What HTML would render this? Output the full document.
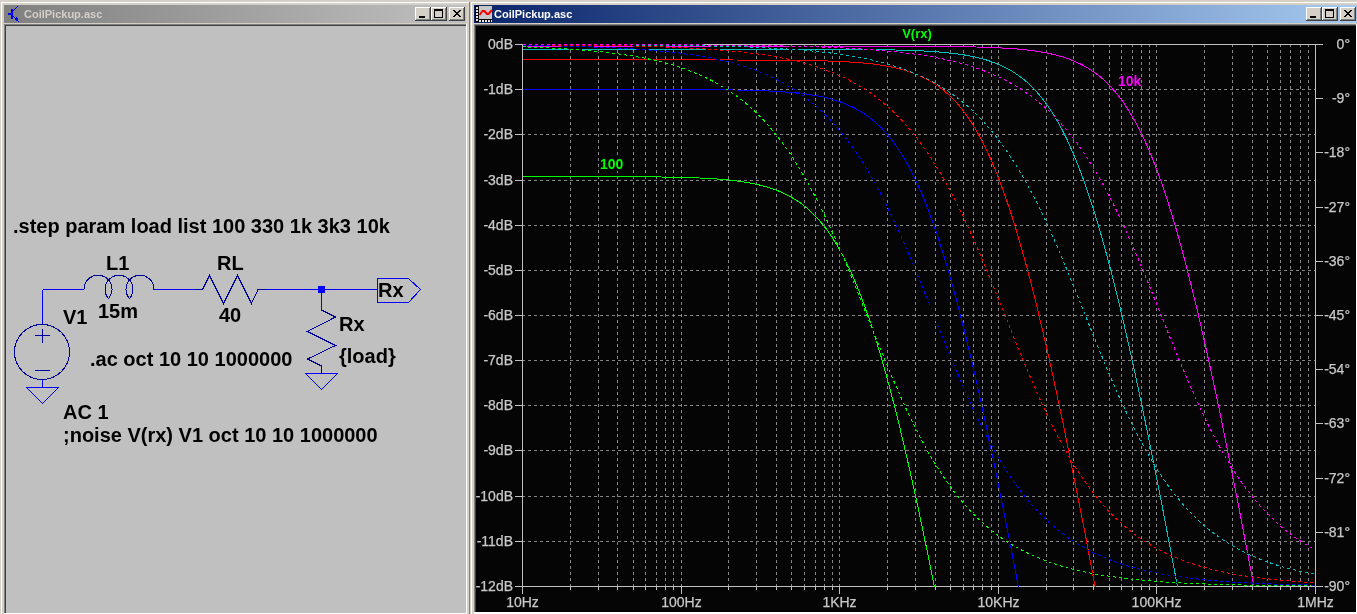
<!DOCTYPE html>
<html><head><meta charset="utf-8"><style>
html,body{margin:0;padding:0;background:#D4D0C8;width:1357px;height:614px;overflow:hidden}
svg{display:block;will-change:transform}
text{font-family:"Liberation Sans",sans-serif}
</style></head><body>
<svg width="1357" height="614" viewBox="0 0 1357 614">
<defs>
<linearGradient id="act" x1="0" y1="0" x2="1" y2="0">
<stop offset="0" stop-color="#0A246A"/><stop offset="1" stop-color="#A6CAF0"/>
</linearGradient>
<linearGradient id="inact" x1="0" y1="0" x2="1" y2="0">
<stop offset="0" stop-color="#808080"/><stop offset="1" stop-color="#C0C0C0"/>
</linearGradient>
<clipPath id="pclip"><rect x="522" y="44" width="794" height="543"/></clipPath>
</defs>
<rect x="0" y="0" width="1357" height="614" fill="#D4D0C8"/>
<g shape-rendering="crispEdges">
<!-- left window frame -->
<rect x="1" y="2" width="1" height="612" fill="#FFFFFF"/>
<rect x="1" y="2" width="468" height="1" fill="#FFFFFF"/>
<rect x="469" y="2" width="1" height="612" fill="#808080"/>
<rect x="4" y="5" width="462" height="18" fill="url(#inact)"/>
<rect x="4" y="24" width="462" height="1" fill="#808080"/>
<rect x="4" y="24" width="1" height="590" fill="#808080"/>
<rect x="5" y="25" width="461" height="1" fill="#404040"/>
<rect x="5" y="25" width="1" height="588" fill="#404040"/>
<rect x="466" y="24" width="1" height="590" fill="#FFFFFF"/>
<rect x="4" y="613" width="463" height="1" fill="#FFFFFF"/>
<rect x="6" y="26" width="460" height="587" fill="#C0C0C0"/>
<!-- right window frame -->
<rect x="471" y="2" width="1" height="612" fill="#FFFFFF"/>
<rect x="471" y="2" width="886" height="1" fill="#FFFFFF"/>
<rect x="474" y="5" width="883" height="18" fill="url(#act)"/>
<rect x="474" y="24" width="883" height="1" fill="#808080"/>
<rect x="474" y="24" width="1" height="590" fill="#808080"/>
<rect x="475" y="25" width="882" height="1" fill="#404040"/>
<rect x="475" y="25" width="1" height="588" fill="#404040"/>
<rect x="476" y="26" width="880" height="586" fill="#050505"/>
<rect x="1356" y="24" width="1" height="590" fill="#FFFFFF"/>
<rect x="474" y="612" width="883" height="2" fill="#FFFFFF"/>
</g>
<!-- titles -->
<text x="24" y="18" font-size="11" font-weight="bold" fill="#D4D0C8">CoilPickup.asc</text>
<text x="494" y="18" font-size="11" font-weight="bold" fill="#FFFFFF">CoilPickup.asc</text>
<g shape-rendering="crispEdges"><g transform="translate(415,7)"><rect x="0" y="0" width="16" height="14" fill="#D4D0C8"/><path d="M0.5,13.5 V0.5 H15.5" stroke="#FFFFFF" fill="none"/><path d="M15.5,0 V14 M0,13.5 H16" stroke="#404040" fill="none"/><path d="M14.5,1 V13 M1,12.5 H15" stroke="#808080" fill="none"/><rect x="4" y="9" width="6" height="2" fill="#000"/></g><g transform="translate(431,7)"><rect x="0" y="0" width="16" height="14" fill="#D4D0C8"/><path d="M0.5,13.5 V0.5 H15.5" stroke="#FFFFFF" fill="none"/><path d="M15.5,0 V14 M0,13.5 H16" stroke="#404040" fill="none"/><path d="M14.5,1 V13 M1,12.5 H15" stroke="#808080" fill="none"/><path d="M3.5,2.5 H11.5 V10.5 H3.5 Z" fill="none" stroke="#000"/><rect x="3" y="2" width="9" height="2" fill="#000"/></g><g transform="translate(449,7)"><rect x="0" y="0" width="16" height="14" fill="#D4D0C8"/><path d="M0.5,13.5 V0.5 H15.5" stroke="#FFFFFF" fill="none"/><path d="M15.5,0 V14 M0,13.5 H16" stroke="#404040" fill="none"/><path d="M14.5,1 V13 M1,12.5 H15" stroke="#808080" fill="none"/><path d="M4,3 L11,10 M5,3 L12,10 M11,3 L4,10 M12,3 L5,10" stroke="#000" stroke-width="1" fill="none"/></g><g transform="translate(1306,7)"><rect x="0" y="0" width="16" height="14" fill="#D4D0C8"/><path d="M0.5,13.5 V0.5 H15.5" stroke="#FFFFFF" fill="none"/><path d="M15.5,0 V14 M0,13.5 H16" stroke="#404040" fill="none"/><path d="M14.5,1 V13 M1,12.5 H15" stroke="#808080" fill="none"/><rect x="4" y="9" width="6" height="2" fill="#000"/></g><g transform="translate(1322,7)"><rect x="0" y="0" width="16" height="14" fill="#D4D0C8"/><path d="M0.5,13.5 V0.5 H15.5" stroke="#FFFFFF" fill="none"/><path d="M15.5,0 V14 M0,13.5 H16" stroke="#404040" fill="none"/><path d="M14.5,1 V13 M1,12.5 H15" stroke="#808080" fill="none"/><path d="M3.5,2.5 H11.5 V10.5 H3.5 Z" fill="none" stroke="#000"/><rect x="3" y="2" width="9" height="2" fill="#000"/></g><g transform="translate(1340,7)"><rect x="0" y="0" width="16" height="14" fill="#D4D0C8"/><path d="M0.5,13.5 V0.5 H15.5" stroke="#FFFFFF" fill="none"/><path d="M15.5,0 V14 M0,13.5 H16" stroke="#404040" fill="none"/><path d="M14.5,1 V13 M1,12.5 H15" stroke="#808080" fill="none"/><path d="M4,3 L11,10 M5,3 L12,10 M11,3 L4,10 M12,3 L5,10" stroke="#000" stroke-width="1" fill="none"/></g></g>
<!-- left icon: transistor -->
<g shape-rendering="crispEdges" fill="#0000FF">
<rect x="11" y="9" width="2" height="10"/>
<rect x="8" y="13" width="3" height="2"/>
<rect x="13" y="10" width="1" height="1"/><rect x="14" y="9" width="1" height="1"/><rect x="15" y="8" width="1" height="1"/><rect x="16" y="7" width="1" height="1"/><rect x="17" y="6" width="1" height="1"/>
<rect x="13" y="16" width="1" height="1"/><rect x="14" y="17" width="1" height="1"/><rect x="15" y="18" width="3" height="2"/><rect x="16" y="17" width="1" height="4"/><rect x="17" y="20" width="1" height="1"/><rect x="18" y="21" width="1" height="1"/>
</g>
<!-- right icon: waveform -->
<g shape-rendering="crispEdges">
<rect x="475" y="6" width="17" height="16" fill="#000"/>
<rect x="479" y="6" width="13" height="13" fill="#C8C8C8"/>
<g fill="#E8E8E8">
<rect x="476" y="7" width="2" height="2"/><rect x="476" y="10" width="2" height="2"/><rect x="476" y="13" width="2" height="2"/><rect x="476" y="16" width="2" height="2"/><rect x="476" y="19" width="2" height="2"/>
<rect x="479" y="20" width="2" height="2"/><rect x="482" y="20" width="2" height="2"/><rect x="485" y="20" width="2" height="2"/><rect x="488" y="20" width="2" height="2"/><rect x="491" y="20" width="1" height="2"/>
</g>
</g>
<path d="M479.5,15 L482.5,11 L484.5,11 L487,14 L488.5,14 L492,10" stroke="#FF0000" stroke-width="2" fill="none"/>
<!-- schematic -->
<g fill="none" stroke-width="1" shape-rendering="crispEdges">
<path d="M42.5,289.5 H84 M153,289.5 H202 M264,289.5 H377 M42.5,289.5 V324 M321.5,289.5 V310 M42.5,380 V387" stroke="#0000FF"/>
<path d="M305.5,373.5 H337.5 L321.5,389.5 Z M26.5,387.5 H58.5 L42.5,403.5 Z" stroke="#0000FF"/>
<path d="M377.5,278.5 H408.5 L420.5,289.5 L408.5,302.5 H377.5 Z" stroke="#0000FF"/>
</g>
<g fill="none" stroke="#00009C" stroke-width="1" shape-rendering="crispEdges">
<path d="M84,289.5 A14,14 0 1 1 108.5,298.5 A14,14 0 1 1 129.5,298.5 A14,14 0 1 1 154,289.5"/>
<path d="M196,289.5 H202.5 L209.5,275.5 L223.5,303.5 L237.5,275.5 L251.5,303.5 L258,289.5 H265"/>
<path d="M321.5,310 L335.5,317 L307.5,331.5 L335.5,345.5 L307.5,359 L321.5,366 V373"/>
<circle cx="42" cy="352" r="27.5"/>
<path d="M35,335.5 H50 M42.5,329 V343 M35,370.5 H50" shape-rendering="crispEdges"/>
</g>
<rect x="318" y="286" width="7" height="7" fill="#0000FF"/>
<g font-size="20" font-weight="bold" fill="#000">
<text x="13" y="233">.step param load list 100 330 1k 3k3 10k</text>
<text x="106" y="270">L1</text>
<text x="98" y="318">15m</text>
<text x="63" y="324">V1</text>
<text x="217" y="270">RL</text>
<text x="219" y="322">40</text>
<text x="339" y="331">Rx</text>
<text x="339" y="363">{load}</text>
<text x="378" y="297">Rx</text>
<text x="90" y="366">.ac oct 10 10 1000000</text>
<text x="63" y="419">AC 1</text>
<text x="63" y="442">;noise V(rx) V1 oct 10 10 1000000</text>
</g>
<!-- plot -->
<g stroke="#868686" stroke-width="1" stroke-dasharray="3 3" shape-rendering="crispEdges">
<line x1="570.5" y1="44" x2="570.5" y2="586" />
<line x1="598.5" y1="44" x2="598.5" y2="586" />
<line x1="617.5" y1="44" x2="617.5" y2="586" />
<line x1="633.5" y1="44" x2="633.5" y2="586" />
<line x1="645.5" y1="44" x2="645.5" y2="586" />
<line x1="656.5" y1="44" x2="656.5" y2="586" />
<line x1="665.5" y1="44" x2="665.5" y2="586" />
<line x1="673.5" y1="44" x2="673.5" y2="586" />
<line x1="681.5" y1="44" x2="681.5" y2="586" />
<line x1="728.5" y1="44" x2="728.5" y2="586" />
<line x1="756.5" y1="44" x2="756.5" y2="586" />
<line x1="776.5" y1="44" x2="776.5" y2="586" />
<line x1="791.5" y1="44" x2="791.5" y2="586" />
<line x1="804.5" y1="44" x2="804.5" y2="586" />
<line x1="815.5" y1="44" x2="815.5" y2="586" />
<line x1="824.5" y1="44" x2="824.5" y2="586" />
<line x1="832.5" y1="44" x2="832.5" y2="586" />
<line x1="839.5" y1="44" x2="839.5" y2="586" />
<line x1="887.5" y1="44" x2="887.5" y2="586" />
<line x1="915.5" y1="44" x2="915.5" y2="586" />
<line x1="935.5" y1="44" x2="935.5" y2="586" />
<line x1="950.5" y1="44" x2="950.5" y2="586" />
<line x1="963.5" y1="44" x2="963.5" y2="586" />
<line x1="973.5" y1="44" x2="973.5" y2="586" />
<line x1="982.5" y1="44" x2="982.5" y2="586" />
<line x1="991.5" y1="44" x2="991.5" y2="586" />
<line x1="998.5" y1="44" x2="998.5" y2="586" />
<line x1="1046.5" y1="44" x2="1046.5" y2="586" />
<line x1="1073.5" y1="44" x2="1073.5" y2="586" />
<line x1="1093.5" y1="44" x2="1093.5" y2="586" />
<line x1="1109.5" y1="44" x2="1109.5" y2="586" />
<line x1="1121.5" y1="44" x2="1121.5" y2="586" />
<line x1="1132.5" y1="44" x2="1132.5" y2="586" />
<line x1="1141.5" y1="44" x2="1141.5" y2="586" />
<line x1="1149.5" y1="44" x2="1149.5" y2="586" />
<line x1="1156.5" y1="44" x2="1156.5" y2="586" />
<line x1="1204.5" y1="44" x2="1204.5" y2="586" />
<line x1="1232.5" y1="44" x2="1232.5" y2="586" />
<line x1="1252.5" y1="44" x2="1252.5" y2="586" />
<line x1="1267.5" y1="44" x2="1267.5" y2="586" />
<line x1="1280.5" y1="44" x2="1280.5" y2="586" />
<line x1="1290.5" y1="44" x2="1290.5" y2="586" />
<line x1="1300.5" y1="44" x2="1300.5" y2="586" />
<line x1="1308.5" y1="44" x2="1308.5" y2="586" />
<line x1="522" y1="89.5" x2="1315" y2="89.5" />
<line x1="522" y1="134.5" x2="1315" y2="134.5" />
<line x1="522" y1="180.5" x2="1315" y2="180.5" />
<line x1="522" y1="225.5" x2="1315" y2="225.5" />
<line x1="522" y1="270.5" x2="1315" y2="270.5" />
<line x1="522" y1="315.5" x2="1315" y2="315.5" />
<line x1="522" y1="360.5" x2="1315" y2="360.5" />
<line x1="522" y1="405.5" x2="1315" y2="405.5" />
<line x1="522" y1="450.5" x2="1315" y2="450.5" />
<line x1="522" y1="496.5" x2="1315" y2="496.5" />
<line x1="522" y1="541.5" x2="1315" y2="541.5" />
</g>
<g stroke="#C0C0C0" stroke-width="1" shape-rendering="crispEdges">
<rect x="522.5" y="44.5" width="793" height="542" fill="none"/>
<line x1="515" y1="44.5" x2="522" y2="44.5"/>
<line x1="515" y1="89.5" x2="522" y2="89.5"/>
<line x1="515" y1="134.5" x2="522" y2="134.5"/>
<line x1="515" y1="180.5" x2="522" y2="180.5"/>
<line x1="515" y1="225.5" x2="522" y2="225.5"/>
<line x1="515" y1="270.5" x2="522" y2="270.5"/>
<line x1="515" y1="315.5" x2="522" y2="315.5"/>
<line x1="515" y1="360.5" x2="522" y2="360.5"/>
<line x1="515" y1="405.5" x2="522" y2="405.5"/>
<line x1="515" y1="450.5" x2="522" y2="450.5"/>
<line x1="515" y1="496.5" x2="522" y2="496.5"/>
<line x1="515" y1="541.5" x2="522" y2="541.5"/>
<line x1="515" y1="586.5" x2="522" y2="586.5"/>
<line x1="1315" y1="44.5" x2="1323" y2="44.5"/>
<line x1="1315" y1="98.5" x2="1323" y2="98.5"/>
<line x1="1315" y1="152.5" x2="1323" y2="152.5"/>
<line x1="1315" y1="207.5" x2="1323" y2="207.5"/>
<line x1="1315" y1="261.5" x2="1323" y2="261.5"/>
<line x1="1315" y1="315.5" x2="1323" y2="315.5"/>
<line x1="1315" y1="369.5" x2="1323" y2="369.5"/>
<line x1="1315" y1="423.5" x2="1323" y2="423.5"/>
<line x1="1315" y1="478.5" x2="1323" y2="478.5"/>
<line x1="1315" y1="532.5" x2="1323" y2="532.5"/>
<line x1="1315" y1="586.5" x2="1323" y2="586.5"/>
<line x1="522.5" y1="586" x2="522.5" y2="594"/>
<line x1="681.5" y1="586" x2="681.5" y2="594"/>
<line x1="839.5" y1="586" x2="839.5" y2="594"/>
<line x1="998.5" y1="586" x2="998.5" y2="594"/>
<line x1="1156.5" y1="586" x2="1156.5" y2="594"/>
<line x1="1315.5" y1="586" x2="1315.5" y2="594"/>
<line x1="570.5" y1="586" x2="570.5" y2="590"/>
<line x1="598.5" y1="586" x2="598.5" y2="590"/>
<line x1="617.5" y1="586" x2="617.5" y2="590"/>
<line x1="633.5" y1="586" x2="633.5" y2="590"/>
<line x1="645.5" y1="586" x2="645.5" y2="590"/>
<line x1="656.5" y1="586" x2="656.5" y2="590"/>
<line x1="665.5" y1="586" x2="665.5" y2="590"/>
<line x1="673.5" y1="586" x2="673.5" y2="590"/>
<line x1="728.5" y1="586" x2="728.5" y2="590"/>
<line x1="756.5" y1="586" x2="756.5" y2="590"/>
<line x1="776.5" y1="586" x2="776.5" y2="590"/>
<line x1="791.5" y1="586" x2="791.5" y2="590"/>
<line x1="804.5" y1="586" x2="804.5" y2="590"/>
<line x1="815.5" y1="586" x2="815.5" y2="590"/>
<line x1="824.5" y1="586" x2="824.5" y2="590"/>
<line x1="832.5" y1="586" x2="832.5" y2="590"/>
<line x1="887.5" y1="586" x2="887.5" y2="590"/>
<line x1="915.5" y1="586" x2="915.5" y2="590"/>
<line x1="935.5" y1="586" x2="935.5" y2="590"/>
<line x1="950.5" y1="586" x2="950.5" y2="590"/>
<line x1="963.5" y1="586" x2="963.5" y2="590"/>
<line x1="973.5" y1="586" x2="973.5" y2="590"/>
<line x1="982.5" y1="586" x2="982.5" y2="590"/>
<line x1="991.5" y1="586" x2="991.5" y2="590"/>
<line x1="1046.5" y1="586" x2="1046.5" y2="590"/>
<line x1="1073.5" y1="586" x2="1073.5" y2="590"/>
<line x1="1093.5" y1="586" x2="1093.5" y2="590"/>
<line x1="1109.5" y1="586" x2="1109.5" y2="590"/>
<line x1="1121.5" y1="586" x2="1121.5" y2="590"/>
<line x1="1132.5" y1="586" x2="1132.5" y2="590"/>
<line x1="1141.5" y1="586" x2="1141.5" y2="590"/>
<line x1="1149.5" y1="586" x2="1149.5" y2="590"/>
<line x1="1204.5" y1="586" x2="1204.5" y2="590"/>
<line x1="1232.5" y1="586" x2="1232.5" y2="590"/>
<line x1="1252.5" y1="586" x2="1252.5" y2="590"/>
<line x1="1267.5" y1="586" x2="1267.5" y2="590"/>
<line x1="1280.5" y1="586" x2="1280.5" y2="590"/>
<line x1="1290.5" y1="586" x2="1290.5" y2="590"/>
<line x1="1300.5" y1="586" x2="1300.5" y2="590"/>
<line x1="1308.5" y1="586" x2="1308.5" y2="590"/>
</g>
<g font-size="14" fill="#C8C8C8" stroke="#C8C8C8" stroke-width="0.25">
<text x="513" y="49" text-anchor="end">0dB</text>
<text x="513" y="94" text-anchor="end">-1dB</text>
<text x="513" y="139" text-anchor="end">-2dB</text>
<text x="513" y="185" text-anchor="end">-3dB</text>
<text x="513" y="230" text-anchor="end">-4dB</text>
<text x="513" y="275" text-anchor="end">-5dB</text>
<text x="513" y="320" text-anchor="end">-6dB</text>
<text x="513" y="365" text-anchor="end">-7dB</text>
<text x="513" y="410" text-anchor="end">-8dB</text>
<text x="513" y="455" text-anchor="end">-9dB</text>
<text x="513" y="501" text-anchor="end">-10dB</text>
<text x="513" y="546" text-anchor="end">-11dB</text>
<text x="513" y="591" text-anchor="end">-12dB</text>
<text x="1350" y="49" text-anchor="end">0°</text>
<text x="1350" y="103" text-anchor="end">-9°</text>
<text x="1350" y="157" text-anchor="end">-18°</text>
<text x="1350" y="212" text-anchor="end">-27°</text>
<text x="1350" y="266" text-anchor="end">-36°</text>
<text x="1350" y="320" text-anchor="end">-45°</text>
<text x="1350" y="374" text-anchor="end">-54°</text>
<text x="1350" y="428" text-anchor="end">-63°</text>
<text x="1350" y="483" text-anchor="end">-72°</text>
<text x="1350" y="537" text-anchor="end">-81°</text>
<text x="1350" y="591" text-anchor="end">-90°</text>
<text x="522.5" y="607" text-anchor="middle">10Hz</text>
<text x="681.5" y="607" text-anchor="middle">100Hz</text>
<text x="839.5" y="607" text-anchor="middle">1KHz</text>
<text x="998.5" y="607" text-anchor="middle">10KHz</text>
<text x="1156.5" y="607" text-anchor="middle">100KHz</text>
<text x="1315.5" y="607" text-anchor="middle">1MHz</text>
</g>
<g clip-path="url(#pclip)" shape-rendering="crispEdges">
<polyline points="522.5,176.5 527.3,176.5 532.0,176.5 536.8,176.5 541.6,176.5 546.4,176.5 551.1,176.5 555.9,176.5 560.7,176.5 565.5,176.5 570.2,176.5 575.0,176.5 579.8,176.5 584.6,176.6 589.3,176.6 594.1,176.6 598.9,176.6 603.7,176.6 608.4,176.6 613.2,176.6 618.0,176.6 622.8,176.7 627.5,176.7 632.3,176.7 637.1,176.7 641.9,176.8 646.6,176.8 651.4,176.9 656.2,176.9 661.0,177.0 665.7,177.1 670.5,177.2 675.3,177.3 680.1,177.4 684.8,177.5 689.6,177.6 694.4,177.8 699.2,178.0 703.9,178.2 708.7,178.5 713.5,178.8 718.2,179.1 723.0,179.5 727.8,179.9 732.6,180.4 737.3,181.0 742.1,181.7 746.9,182.4 751.7,183.3 756.4,184.3 761.2,185.4 766.0,186.7 770.8,188.2 775.5,189.8 780.3,191.7 785.1,193.9 789.9,196.4 794.6,199.2 799.4,202.3 804.2,205.9 809.0,209.9 813.7,214.4 818.5,219.5 823.3,225.1 828.1,231.4 832.8,238.4 837.6,246.2 842.4,254.7 847.2,264.1 851.9,274.3 856.7,285.4 861.5,297.5 866.3,310.5 871.0,324.4 875.8,339.3 880.6,355.1 885.3,371.8 890.1,389.3 894.9,407.8 899.7,427.0 904.4,447.0 909.2,467.6 914.0,489.0 918.8,511.0 923.5,533.5 928.3,556.5 933.1,580.0 937.9,603.9 942.6,628.2 947.4,652.9 952.2,677.8 957.0,703.0 961.7,728.5 966.5,754.1 971.3,780.0 976.1,806.0 980.8,832.2 985.6,858.5 990.4,884.9 995.2,911.4 999.9,938.0 1004.7,964.6 1009.5,991.4 1014.3,1018.2 1019.0,1045.0 1023.8,1071.9 1028.6,1098.8 1033.4,1125.8 1038.1,1152.8 1042.9,1179.8 1047.7,1206.9 1052.5,1233.9 1057.2,1261.0 1062.0,1288.1 1066.8,1315.2 1071.5,1342.3 1076.3,1369.4 1081.1,1396.6 1085.9,1423.7 1090.6,1450.9 1095.4,1478.0 1100.2,1505.2 1105.0,1532.3 1109.7,1559.5 1114.5,1586.7 1119.3,1613.9 1124.1,1641.0 1128.8,1668.2 1133.6,1695.4 1138.4,1722.6 1143.2,1749.8 1147.9,1776.9 1152.7,1804.1 1157.5,1831.3 1162.3,1858.5 1167.0,1885.7 1171.8,1912.9 1176.6,1940.1 1181.4,1967.3 1186.1,1994.4 1190.9,2021.6 1195.7,2048.8 1200.5,2076.0 1205.2,2103.2 1210.0,2130.4 1214.8,2157.6 1219.6,2184.8 1224.3,2212.0 1229.1,2239.2 1233.9,2266.4 1238.7,2293.6 1243.4,2320.7 1248.2,2347.9 1253.0,2375.1 1257.7,2402.3 1262.5,2429.5 1267.3,2456.7 1272.1,2483.9 1276.8,2511.1 1281.6,2538.3 1286.4,2565.5 1291.2,2592.7 1295.9,2619.9 1300.7,2647.1 1305.5,2674.3 1310.3,2701.4 1315.0,2728.6" fill="none" stroke="#00FF00" stroke-width="1"/>
<polyline points="522.5,89.4 527.3,89.4 532.0,89.4 536.8,89.4 541.6,89.4 546.4,89.4 551.1,89.4 555.9,89.4 560.7,89.4 565.5,89.4 570.2,89.4 575.0,89.4 579.8,89.4 584.6,89.4 589.3,89.4 594.1,89.4 598.9,89.4 603.7,89.4 608.4,89.4 613.2,89.4 618.0,89.4 622.8,89.4 627.5,89.4 632.3,89.4 637.1,89.4 641.9,89.4 646.6,89.4 651.4,89.4 656.2,89.4 661.0,89.5 665.7,89.5 670.5,89.5 675.3,89.5 680.1,89.5 684.8,89.5 689.6,89.5 694.4,89.6 699.2,89.6 703.9,89.6 708.7,89.7 713.5,89.7 718.2,89.8 723.0,89.8 727.8,89.9 732.6,90.0 737.3,90.0 742.1,90.1 746.9,90.2 751.7,90.4 756.4,90.5 761.2,90.7 766.0,90.9 770.8,91.1 775.5,91.4 780.3,91.6 785.1,92.0 789.9,92.4 794.6,92.8 799.4,93.3 804.2,93.9 809.0,94.5 813.7,95.3 818.5,96.1 823.3,97.1 828.1,98.3 832.8,99.5 837.6,101.0 842.4,102.7 847.2,104.6 851.9,106.7 856.7,109.2 861.5,112.0 866.3,115.1 871.0,118.7 875.8,122.7 880.6,127.2 885.3,132.2 890.1,137.9 894.9,144.2 899.7,151.2 904.4,158.9 909.2,167.4 914.0,176.7 918.8,187.0 923.5,198.1 928.3,210.1 933.1,223.1 937.9,237.0 942.6,251.8 947.4,267.6 952.2,284.3 957.0,301.8 961.7,320.2 966.5,339.5 971.3,359.4 976.1,380.1 980.8,401.4 985.6,423.4 990.4,445.9 995.2,468.9 999.9,492.4 1004.7,516.3 1009.5,540.6 1014.3,565.2 1019.0,590.2 1023.8,615.4 1028.6,640.8 1033.4,666.5 1038.1,692.3 1042.9,718.4 1047.7,744.5 1052.5,770.8 1057.2,797.2 1062.0,823.7 1066.8,850.3 1071.5,877.0 1076.3,903.7 1081.1,930.5 1085.9,957.3 1090.6,984.2 1095.4,1011.2 1100.2,1038.1 1105.0,1065.1 1109.7,1092.1 1114.5,1119.2 1119.3,1146.2 1124.1,1173.3 1128.8,1200.4 1133.6,1227.5 1138.4,1254.6 1143.2,1281.7 1147.9,1308.9 1152.7,1336.0 1157.5,1363.2 1162.3,1390.3 1167.0,1417.5 1171.8,1444.7 1176.6,1471.8 1181.4,1499.0 1186.1,1526.2 1190.9,1553.3 1195.7,1580.5 1200.5,1607.7 1205.2,1634.9 1210.0,1662.1 1214.8,1689.2 1219.6,1716.4 1224.3,1743.6 1229.1,1770.8 1233.9,1798.0 1238.7,1825.2 1243.4,1852.4 1248.2,1879.6 1253.0,1906.8 1257.7,1933.9 1262.5,1961.1 1267.3,1988.3 1272.1,2015.5 1276.8,2042.7 1281.6,2069.9 1286.4,2097.1 1291.2,2124.3 1295.9,2151.5 1300.7,2178.7 1305.5,2205.9 1310.3,2233.1 1315.0,2260.2" fill="none" stroke="#0000FF" stroke-width="1"/>
<polyline points="522.5,59.9 527.3,59.9 532.0,59.9 536.8,59.9 541.6,59.9 546.4,59.9 551.1,59.9 555.9,59.9 560.7,59.9 565.5,59.9 570.2,59.9 575.0,59.9 579.8,59.9 584.6,59.9 589.3,59.9 594.1,59.9 598.9,59.9 603.7,59.9 608.4,59.9 613.2,59.9 618.0,59.9 622.8,59.9 627.5,59.9 632.3,59.9 637.1,59.9 641.9,59.9 646.6,59.9 651.4,59.9 656.2,59.9 661.0,59.9 665.7,59.9 670.5,59.9 675.3,59.9 680.1,59.9 684.8,59.9 689.6,59.9 694.4,59.9 699.2,59.9 703.9,59.9 708.7,59.9 713.5,59.9 718.2,59.9 723.0,59.9 727.8,59.9 732.6,60.0 737.3,60.0 742.1,60.0 746.9,60.0 751.7,60.0 756.4,60.0 761.2,60.1 766.0,60.1 770.8,60.1 775.5,60.1 780.3,60.2 785.1,60.2 789.9,60.3 794.6,60.3 799.4,60.4 804.2,60.5 809.0,60.5 813.7,60.6 818.5,60.8 823.3,60.9 828.1,61.0 832.8,61.2 837.6,61.4 842.4,61.6 847.2,61.9 851.9,62.2 856.7,62.5 861.5,62.9 866.3,63.3 871.0,63.8 875.8,64.4 880.6,65.1 885.3,65.9 890.1,66.7 894.9,67.7 899.7,68.9 904.4,70.2 909.2,71.7 914.0,73.3 918.8,75.3 923.5,77.5 928.3,79.9 933.1,82.8 937.9,85.9 942.6,89.5 947.4,93.6 952.2,98.1 957.0,103.2 961.7,108.9 966.5,115.3 971.3,122.3 976.1,130.1 980.8,138.7 985.6,148.1 990.4,158.4 995.2,169.6 999.9,181.7 1004.7,194.8 1009.5,208.8 1014.3,223.7 1019.0,239.6 1023.8,256.3 1028.6,274.0 1033.4,292.4 1038.1,311.7 1042.9,331.8 1047.7,352.5 1052.5,373.9 1057.2,395.9 1062.0,418.4 1066.8,441.5 1071.5,465.0 1076.3,489.0 1081.1,513.3 1085.9,538.0 1090.6,562.9 1095.4,588.2 1100.2,613.6 1105.0,639.3 1109.7,665.2 1114.5,691.2 1119.3,717.4 1124.1,743.7 1128.8,770.1 1133.6,796.6 1138.4,823.2 1143.2,849.9 1147.9,876.6 1152.7,903.4 1157.5,930.3 1162.3,957.2 1167.0,984.1 1171.8,1011.1 1176.6,1038.0 1181.4,1065.1 1186.1,1092.1 1190.9,1119.2 1195.7,1146.3 1200.5,1173.3 1205.2,1200.4 1210.0,1227.6 1214.8,1254.7 1219.6,1281.8 1224.3,1309.0 1229.1,1336.1 1233.9,1363.3 1238.7,1390.4 1243.4,1417.6 1248.2,1444.8 1253.0,1471.9 1257.7,1499.1 1262.5,1526.3 1267.3,1553.5 1272.1,1580.7 1276.8,1607.8 1281.6,1635.0 1286.4,1662.2 1291.2,1689.4 1295.9,1716.6 1300.7,1743.8 1305.5,1770.9 1310.3,1798.1 1315.0,1825.3" fill="none" stroke="#FF0000" stroke-width="1"/>
<polyline points="522.5,49.2 527.3,49.2 532.0,49.2 536.8,49.2 541.6,49.2 546.4,49.2 551.1,49.2 555.9,49.2 560.7,49.2 565.5,49.2 570.2,49.2 575.0,49.2 579.8,49.2 584.6,49.2 589.3,49.2 594.1,49.2 598.9,49.2 603.7,49.2 608.4,49.2 613.2,49.2 618.0,49.2 622.8,49.2 627.5,49.2 632.3,49.2 637.1,49.2 641.9,49.2 646.6,49.2 651.4,49.2 656.2,49.2 661.0,49.2 665.7,49.2 670.5,49.2 675.3,49.2 680.1,49.2 684.8,49.2 689.6,49.2 694.4,49.2 699.2,49.2 703.9,49.2 708.7,49.2 713.5,49.2 718.2,49.2 723.0,49.2 727.8,49.2 732.6,49.2 737.3,49.2 742.1,49.2 746.9,49.2 751.7,49.2 756.4,49.2 761.2,49.2 766.0,49.2 770.8,49.2 775.5,49.3 780.3,49.3 785.1,49.3 789.9,49.3 794.6,49.3 799.4,49.3 804.2,49.3 809.0,49.3 813.7,49.3 818.5,49.3 823.3,49.3 828.1,49.3 832.8,49.4 837.6,49.4 842.4,49.4 847.2,49.4 851.9,49.4 856.7,49.5 861.5,49.5 866.3,49.6 871.0,49.6 875.8,49.7 880.6,49.7 885.3,49.8 890.1,49.9 894.9,50.0 899.7,50.1 904.4,50.2 909.2,50.4 914.0,50.6 918.8,50.8 923.5,51.0 928.3,51.3 933.1,51.6 937.9,51.9 942.6,52.3 947.4,52.8 952.2,53.3 957.0,53.9 961.7,54.6 966.5,55.3 971.3,56.2 976.1,57.2 980.8,58.4 985.6,59.7 990.4,61.3 995.2,63.0 999.9,65.0 1004.7,67.2 1009.5,69.7 1014.3,72.6 1019.0,75.9 1023.8,79.5 1028.6,83.6 1033.4,88.3 1038.1,93.5 1042.9,99.3 1047.7,105.8 1052.5,112.9 1057.2,120.8 1062.0,129.6 1066.8,139.1 1071.5,149.6 1076.3,160.9 1081.1,173.2 1085.9,186.4 1090.6,200.6 1095.4,215.6 1100.2,231.7 1105.0,248.6 1109.7,266.3 1114.5,285.0 1119.3,304.4 1124.1,324.5 1128.8,345.4 1133.6,366.9 1138.4,389.0 1143.2,411.6 1147.9,434.8 1152.7,458.4 1157.5,482.4 1162.3,506.8 1167.0,531.5 1171.8,556.5 1176.6,581.8 1181.4,607.3 1186.1,633.0 1190.9,658.9 1195.7,684.9 1200.5,711.1 1205.2,737.4 1210.0,763.9 1214.8,790.4 1219.6,817.0 1224.3,843.7 1229.1,870.4 1233.9,897.2 1238.7,924.1 1243.4,951.0 1248.2,977.9 1253.0,1004.9 1257.7,1031.9 1262.5,1058.9 1267.3,1086.0 1272.1,1113.0 1276.8,1140.1 1281.6,1167.2 1286.4,1194.3 1291.2,1221.4 1295.9,1248.6 1300.7,1275.7 1305.5,1302.9 1310.3,1330.0 1315.0,1357.2" fill="none" stroke="#00BFBF" stroke-width="1"/>
<polyline points="522.5,46.1 527.3,46.1 532.0,46.1 536.8,46.1 541.6,46.1 546.4,46.1 551.1,46.1 555.9,46.1 560.7,46.1 565.5,46.1 570.2,46.1 575.0,46.1 579.8,46.1 584.6,46.1 589.3,46.1 594.1,46.1 598.9,46.1 603.7,46.1 608.4,46.1 613.2,46.1 618.0,46.1 622.8,46.1 627.5,46.1 632.3,46.1 637.1,46.1 641.9,46.1 646.6,46.1 651.4,46.1 656.2,46.1 661.0,46.1 665.7,46.1 670.5,46.1 675.3,46.1 680.1,46.1 684.8,46.1 689.6,46.1 694.4,46.1 699.2,46.1 703.9,46.1 708.7,46.1 713.5,46.1 718.2,46.1 723.0,46.1 727.8,46.1 732.6,46.1 737.3,46.1 742.1,46.1 746.9,46.1 751.7,46.1 756.4,46.1 761.2,46.1 766.0,46.1 770.8,46.1 775.5,46.1 780.3,46.1 785.1,46.1 789.9,46.1 794.6,46.1 799.4,46.1 804.2,46.1 809.0,46.1 813.7,46.1 818.5,46.1 823.3,46.1 828.1,46.1 832.8,46.1 837.6,46.1 842.4,46.1 847.2,46.1 851.9,46.1 856.7,46.1 861.5,46.1 866.3,46.1 871.0,46.1 875.8,46.1 880.6,46.1 885.3,46.1 890.1,46.1 894.9,46.2 899.7,46.2 904.4,46.2 909.2,46.2 914.0,46.2 918.8,46.2 923.5,46.3 928.3,46.3 933.1,46.3 937.9,46.4 942.6,46.4 947.4,46.5 952.2,46.5 957.0,46.6 961.7,46.7 966.5,46.8 971.3,46.9 976.1,47.0 980.8,47.1 985.6,47.3 990.4,47.4 995.2,47.6 999.9,47.9 1004.7,48.1 1009.5,48.4 1014.3,48.8 1019.0,49.2 1023.8,49.7 1028.6,50.2 1033.4,50.8 1038.1,51.5 1042.9,52.3 1047.7,53.2 1052.5,54.2 1057.2,55.4 1062.0,56.8 1066.8,58.3 1071.5,60.1 1076.3,62.1 1081.1,64.3 1085.9,66.9 1090.6,69.8 1095.4,73.1 1100.2,76.8 1105.0,81.0 1109.7,85.7 1114.5,91.0 1119.3,96.9 1124.1,103.4 1128.8,110.7 1133.6,118.7 1138.4,127.5 1143.2,137.2 1147.9,147.7 1152.7,159.2 1157.5,171.6 1162.3,184.9 1167.0,199.2 1171.8,214.4 1176.6,230.5 1181.4,247.5 1186.1,265.4 1190.9,284.1 1195.7,303.6 1200.5,323.9 1205.2,344.8 1210.0,366.4 1214.8,388.5 1219.6,411.2 1224.3,434.4 1229.1,458.1 1233.9,482.2 1238.7,506.6 1243.4,531.3 1248.2,556.4 1253.0,581.7 1257.7,607.2 1262.5,632.9 1267.3,658.9 1272.1,684.9 1276.8,711.1 1281.6,737.5 1286.4,763.9 1291.2,790.5 1295.9,817.1 1300.7,843.8 1305.5,870.5 1310.3,897.4 1315.0,924.2" fill="none" stroke="#FF00FF" stroke-width="1"/>
<polyline points="522.5,46.8 527.3,47.0 532.0,47.2 536.8,47.4 541.6,47.6 546.4,47.8 551.1,48.0 555.9,48.3 560.7,48.5 565.5,48.8 570.2,49.1 575.0,49.5 579.8,49.8 584.6,50.2 589.3,50.6 594.1,51.1 598.9,51.5 603.7,52.0 608.4,52.6 613.2,53.2 618.0,53.8 622.8,54.5 627.5,55.2 632.3,55.9 637.1,56.8 641.9,57.6 646.6,58.6 651.4,59.6 656.2,60.7 661.0,61.8 665.7,63.1 670.5,64.4 675.3,65.8 680.1,67.3 684.8,69.0 689.6,70.7 694.4,72.6 699.2,74.6 703.9,76.8 708.7,79.1 713.5,81.5 718.2,84.2 723.0,87.0 727.8,90.0 732.6,93.2 737.3,96.7 742.1,100.3 746.9,104.3 751.7,108.5 756.4,112.9 761.2,117.7 766.0,122.8 770.8,128.2 775.5,134.0 780.3,140.1 785.1,146.5 789.9,153.4 794.6,160.7 799.4,168.3 804.2,176.4 809.0,184.9 813.7,193.8 818.5,203.1 823.3,212.8 828.1,222.9 832.8,233.3 837.6,244.1 842.4,255.2 847.2,266.6 851.9,278.2 856.7,289.9 861.5,301.8 866.3,313.7 871.0,325.7 875.8,337.6 880.6,349.4 885.3,361.0 890.1,372.5 894.9,383.6 899.7,394.5 904.4,405.1 909.2,415.3 914.0,425.1 918.8,434.5 923.5,443.5 928.3,452.2 933.1,460.3 937.9,468.1 942.6,475.5 947.4,482.5 952.2,489.1 957.0,495.3 961.7,501.1 966.5,506.6 971.3,511.8 976.1,516.7 980.8,521.2 985.6,525.5 990.4,529.5 995.2,533.3 999.9,536.8 1004.7,540.1 1009.5,543.2 1014.3,546.0 1019.0,548.7 1023.8,551.2 1028.6,553.6 1033.4,555.8 1038.1,557.8 1042.9,559.7 1047.7,561.5 1052.5,563.2 1057.2,564.7 1062.0,566.2 1066.8,567.6 1071.5,568.8 1076.3,570.0 1081.1,571.1 1085.9,572.1 1090.6,573.1 1095.4,574.0 1100.2,574.8 1105.0,575.6 1109.7,576.3 1114.5,577.0 1119.3,577.7 1124.1,578.2 1128.8,578.8 1133.6,579.3 1138.4,579.8 1143.2,580.2 1147.9,580.7 1152.7,581.1 1157.5,581.4 1162.3,581.8 1167.0,582.1 1171.8,582.4 1176.6,582.6 1181.4,582.9 1186.1,583.1 1190.9,583.4 1195.7,583.6 1200.5,583.8 1205.2,584.0 1210.0,584.1 1214.8,584.3 1219.6,584.4 1224.3,584.6 1229.1,584.7 1233.9,584.8 1238.7,584.9 1243.4,585.0 1248.2,585.1 1253.0,585.2 1257.7,585.3 1262.5,585.4 1267.3,585.5 1272.1,585.5 1276.8,585.6 1281.6,585.7 1286.4,585.7 1291.2,585.8 1295.9,585.8 1300.7,585.9 1305.5,585.9 1310.3,585.9 1315.0,586.0" fill="none" stroke="#050505" stroke-width="1" stroke-dasharray="3 3" stroke-dashoffset="3"/>
<polyline points="522.5,46.8 527.3,47.0 532.0,47.2 536.8,47.4 541.6,47.6 546.4,47.8 551.1,48.0 555.9,48.3 560.7,48.5 565.5,48.8 570.2,49.1 575.0,49.5 579.8,49.8 584.6,50.2 589.3,50.6 594.1,51.1 598.9,51.5 603.7,52.0 608.4,52.6 613.2,53.2 618.0,53.8 622.8,54.5 627.5,55.2 632.3,55.9 637.1,56.8 641.9,57.6 646.6,58.6 651.4,59.6 656.2,60.7 661.0,61.8 665.7,63.1 670.5,64.4 675.3,65.8 680.1,67.3 684.8,69.0 689.6,70.7 694.4,72.6 699.2,74.6 703.9,76.8 708.7,79.1 713.5,81.5 718.2,84.2 723.0,87.0 727.8,90.0 732.6,93.2 737.3,96.7 742.1,100.3 746.9,104.3 751.7,108.5 756.4,112.9 761.2,117.7 766.0,122.8 770.8,128.2 775.5,134.0 780.3,140.1 785.1,146.5 789.9,153.4 794.6,160.7 799.4,168.3 804.2,176.4 809.0,184.9 813.7,193.8 818.5,203.1 823.3,212.8 828.1,222.9 832.8,233.3 837.6,244.1 842.4,255.2 847.2,266.6 851.9,278.2 856.7,289.9 861.5,301.8 866.3,313.7 871.0,325.7 875.8,337.6 880.6,349.4 885.3,361.0 890.1,372.5 894.9,383.6 899.7,394.5 904.4,405.1 909.2,415.3 914.0,425.1 918.8,434.5 923.5,443.5 928.3,452.2 933.1,460.3 937.9,468.1 942.6,475.5 947.4,482.5 952.2,489.1 957.0,495.3 961.7,501.1 966.5,506.6 971.3,511.8 976.1,516.7 980.8,521.2 985.6,525.5 990.4,529.5 995.2,533.3 999.9,536.8 1004.7,540.1 1009.5,543.2 1014.3,546.0 1019.0,548.7 1023.8,551.2 1028.6,553.6 1033.4,555.8 1038.1,557.8 1042.9,559.7 1047.7,561.5 1052.5,563.2 1057.2,564.7 1062.0,566.2 1066.8,567.6 1071.5,568.8 1076.3,570.0 1081.1,571.1 1085.9,572.1 1090.6,573.1 1095.4,574.0 1100.2,574.8 1105.0,575.6 1109.7,576.3 1114.5,577.0 1119.3,577.7 1124.1,578.2 1128.8,578.8 1133.6,579.3 1138.4,579.8 1143.2,580.2 1147.9,580.7 1152.7,581.1 1157.5,581.4 1162.3,581.8 1167.0,582.1 1171.8,582.4 1176.6,582.6 1181.4,582.9 1186.1,583.1 1190.9,583.4 1195.7,583.6 1200.5,583.8 1205.2,584.0 1210.0,584.1 1214.8,584.3 1219.6,584.4 1224.3,584.6 1229.1,584.7 1233.9,584.8 1238.7,584.9 1243.4,585.0 1248.2,585.1 1253.0,585.2 1257.7,585.3 1262.5,585.4 1267.3,585.5 1272.1,585.5 1276.8,585.6 1281.6,585.7 1286.4,585.7 1291.2,585.8 1295.9,585.8 1300.7,585.9 1305.5,585.9 1310.3,585.9 1315.0,586.0" fill="none" stroke="#00FF00" stroke-width="1" stroke-dasharray="3 3"/>
<polyline points="522.5,45.4 527.3,45.4 532.0,45.5 536.8,45.6 541.6,45.7 546.4,45.7 551.1,45.8 555.9,45.9 560.7,46.0 565.5,46.1 570.2,46.3 575.0,46.4 579.8,46.5 584.6,46.7 589.3,46.8 594.1,47.0 598.9,47.2 603.7,47.4 608.4,47.6 613.2,47.8 618.0,48.0 622.8,48.3 627.5,48.5 632.3,48.8 637.1,49.1 641.9,49.5 646.6,49.8 651.4,50.2 656.2,50.6 661.0,51.1 665.7,51.5 670.5,52.0 675.3,52.6 680.1,53.2 684.8,53.8 689.6,54.4 694.4,55.2 699.2,55.9 703.9,56.7 708.7,57.6 713.5,58.6 718.2,59.6 723.0,60.6 727.8,61.8 732.6,63.0 737.3,64.4 742.1,65.8 746.9,67.3 751.7,68.9 756.4,70.7 761.2,72.6 766.0,74.6 770.8,76.7 775.5,79.0 780.3,81.5 785.1,84.1 789.9,86.9 794.6,89.9 799.4,93.1 804.2,96.6 809.0,100.3 813.7,104.2 818.5,108.4 823.3,112.8 828.1,117.6 832.8,122.7 837.6,128.1 842.4,133.8 847.2,139.9 851.9,146.4 856.7,153.3 861.5,160.5 866.3,168.2 871.0,176.2 875.8,184.7 880.6,193.6 885.3,202.9 890.1,212.6 894.9,222.7 899.7,233.1 904.4,243.9 909.2,255.0 914.0,266.3 918.8,277.9 923.5,289.7 928.3,301.5 933.1,313.5 937.9,325.4 942.6,337.3 947.4,349.1 952.2,360.8 957.0,372.2 961.7,383.4 966.5,394.3 971.3,404.9 976.1,415.1 980.8,424.9 985.6,434.3 990.4,443.4 995.2,452.0 999.9,460.2 1004.7,468.0 1009.5,475.4 1014.3,482.3 1019.0,488.9 1023.8,495.2 1028.6,501.0 1033.4,506.5 1038.1,511.7 1042.9,516.6 1047.7,521.2 1052.5,525.4 1057.2,529.4 1062.0,533.2 1066.8,536.7 1071.5,540.0 1076.3,543.1 1081.1,546.0 1085.9,548.7 1090.6,551.2 1095.4,553.5 1100.2,555.7 1105.0,557.8 1109.7,559.7 1114.5,561.5 1119.3,563.2 1124.1,564.7 1128.8,566.2 1133.6,567.5 1138.4,568.8 1143.2,570.0 1147.9,571.1 1152.7,572.1 1157.5,573.1 1162.3,574.0 1167.0,574.8 1171.8,575.6 1176.6,576.3 1181.4,577.0 1186.1,577.6 1190.9,578.2 1195.7,578.8 1200.5,579.3 1205.2,579.8 1210.0,580.2 1214.8,580.7 1219.6,581.0 1224.3,581.4 1229.1,581.8 1233.9,582.1 1238.7,582.4 1243.4,582.6 1248.2,582.9 1253.0,583.1 1257.7,583.4 1262.5,583.6 1267.3,583.8 1272.1,584.0 1276.8,584.1 1281.6,584.3 1286.4,584.4 1291.2,584.6 1295.9,584.7 1300.7,584.8 1305.5,584.9 1310.3,585.0 1315.0,585.1" fill="none" stroke="#050505" stroke-width="1" stroke-dasharray="3 3" stroke-dashoffset="3"/>
<polyline points="522.5,45.4 527.3,45.4 532.0,45.5 536.8,45.6 541.6,45.7 546.4,45.7 551.1,45.8 555.9,45.9 560.7,46.0 565.5,46.1 570.2,46.3 575.0,46.4 579.8,46.5 584.6,46.7 589.3,46.8 594.1,47.0 598.9,47.2 603.7,47.4 608.4,47.6 613.2,47.8 618.0,48.0 622.8,48.3 627.5,48.5 632.3,48.8 637.1,49.1 641.9,49.5 646.6,49.8 651.4,50.2 656.2,50.6 661.0,51.1 665.7,51.5 670.5,52.0 675.3,52.6 680.1,53.2 684.8,53.8 689.6,54.4 694.4,55.2 699.2,55.9 703.9,56.7 708.7,57.6 713.5,58.6 718.2,59.6 723.0,60.6 727.8,61.8 732.6,63.0 737.3,64.4 742.1,65.8 746.9,67.3 751.7,68.9 756.4,70.7 761.2,72.6 766.0,74.6 770.8,76.7 775.5,79.0 780.3,81.5 785.1,84.1 789.9,86.9 794.6,89.9 799.4,93.1 804.2,96.6 809.0,100.3 813.7,104.2 818.5,108.4 823.3,112.8 828.1,117.6 832.8,122.7 837.6,128.1 842.4,133.8 847.2,139.9 851.9,146.4 856.7,153.3 861.5,160.5 866.3,168.2 871.0,176.2 875.8,184.7 880.6,193.6 885.3,202.9 890.1,212.6 894.9,222.7 899.7,233.1 904.4,243.9 909.2,255.0 914.0,266.3 918.8,277.9 923.5,289.7 928.3,301.5 933.1,313.5 937.9,325.4 942.6,337.3 947.4,349.1 952.2,360.8 957.0,372.2 961.7,383.4 966.5,394.3 971.3,404.9 976.1,415.1 980.8,424.9 985.6,434.3 990.4,443.4 995.2,452.0 999.9,460.2 1004.7,468.0 1009.5,475.4 1014.3,482.3 1019.0,488.9 1023.8,495.2 1028.6,501.0 1033.4,506.5 1038.1,511.7 1042.9,516.6 1047.7,521.2 1052.5,525.4 1057.2,529.4 1062.0,533.2 1066.8,536.7 1071.5,540.0 1076.3,543.1 1081.1,546.0 1085.9,548.7 1090.6,551.2 1095.4,553.5 1100.2,555.7 1105.0,557.8 1109.7,559.7 1114.5,561.5 1119.3,563.2 1124.1,564.7 1128.8,566.2 1133.6,567.5 1138.4,568.8 1143.2,570.0 1147.9,571.1 1152.7,572.1 1157.5,573.1 1162.3,574.0 1167.0,574.8 1171.8,575.6 1176.6,576.3 1181.4,577.0 1186.1,577.6 1190.9,578.2 1195.7,578.8 1200.5,579.3 1205.2,579.8 1210.0,580.2 1214.8,580.7 1219.6,581.0 1224.3,581.4 1229.1,581.8 1233.9,582.1 1238.7,582.4 1243.4,582.6 1248.2,582.9 1253.0,583.1 1257.7,583.4 1262.5,583.6 1267.3,583.8 1272.1,584.0 1276.8,584.1 1281.6,584.3 1286.4,584.4 1291.2,584.6 1295.9,584.7 1300.7,584.8 1305.5,584.9 1310.3,585.0 1315.0,585.1" fill="none" stroke="#0000FF" stroke-width="1" stroke-dasharray="3 3"/>
<polyline points="522.5,44.8 527.3,44.8 532.0,44.9 536.8,44.9 541.6,44.9 546.4,44.9 551.1,45.0 555.9,45.0 560.7,45.0 565.5,45.1 570.2,45.1 575.0,45.2 579.8,45.2 584.6,45.3 589.3,45.3 594.1,45.4 598.9,45.4 603.7,45.5 608.4,45.6 613.2,45.7 618.0,45.8 622.8,45.8 627.5,45.9 632.3,46.0 637.1,46.2 641.9,46.3 646.6,46.4 651.4,46.5 656.2,46.7 661.0,46.8 665.7,47.0 670.5,47.2 675.3,47.4 680.1,47.6 684.8,47.8 689.6,48.0 694.4,48.3 699.2,48.6 703.9,48.9 708.7,49.2 713.5,49.5 718.2,49.9 723.0,50.2 727.8,50.7 732.6,51.1 737.3,51.6 742.1,52.1 746.9,52.6 751.7,53.2 756.4,53.8 761.2,54.5 766.0,55.2 770.8,56.0 775.5,56.8 780.3,57.7 785.1,58.6 789.9,59.7 794.6,60.7 799.4,61.9 804.2,63.2 809.0,64.5 813.7,65.9 818.5,67.5 823.3,69.1 828.1,70.9 832.8,72.7 837.6,74.8 842.4,76.9 847.2,79.2 851.9,81.7 856.7,84.3 861.5,87.2 866.3,90.2 871.0,93.4 875.8,96.9 880.6,100.6 885.3,104.6 890.1,108.8 894.9,113.3 899.7,118.1 904.4,123.2 909.2,128.6 914.0,134.4 918.8,140.5 923.5,147.0 928.3,153.9 933.1,161.2 937.9,168.9 942.6,177.0 947.4,185.5 952.2,194.4 957.0,203.7 961.7,213.5 966.5,223.6 971.3,234.1 976.1,244.9 980.8,256.0 985.6,267.4 990.4,279.0 995.2,290.7 999.9,302.6 1004.7,314.6 1009.5,326.5 1014.3,338.4 1019.0,350.2 1023.8,361.8 1028.6,373.2 1033.4,384.4 1038.1,395.3 1042.9,405.8 1047.7,416.0 1052.5,425.8 1057.2,435.2 1062.0,444.2 1066.8,452.7 1071.5,460.9 1076.3,468.6 1081.1,476.0 1085.9,482.9 1090.6,489.5 1095.4,495.7 1100.2,501.5 1105.0,507.0 1109.7,512.2 1114.5,517.0 1119.3,521.5 1124.1,525.8 1128.8,529.8 1133.6,533.5 1138.4,537.0 1143.2,540.3 1147.9,543.4 1152.7,546.2 1157.5,548.9 1162.3,551.4 1167.0,553.7 1171.8,555.9 1176.6,558.0 1181.4,559.9 1186.1,561.6 1190.9,563.3 1195.7,564.8 1200.5,566.3 1205.2,567.6 1210.0,568.9 1214.8,570.1 1219.6,571.2 1224.3,572.2 1229.1,573.2 1233.9,574.1 1238.7,574.9 1243.4,575.7 1248.2,576.4 1253.0,577.1 1257.7,577.7 1262.5,578.3 1267.3,578.8 1272.1,579.3 1276.8,579.8 1281.6,580.3 1286.4,580.7 1291.2,581.1 1295.9,581.4 1300.7,581.8 1305.5,582.1 1310.3,582.4 1315.0,582.7" fill="none" stroke="#050505" stroke-width="1" stroke-dasharray="3 3" stroke-dashoffset="3"/>
<polyline points="522.5,44.8 527.3,44.8 532.0,44.9 536.8,44.9 541.6,44.9 546.4,44.9 551.1,45.0 555.9,45.0 560.7,45.0 565.5,45.1 570.2,45.1 575.0,45.2 579.8,45.2 584.6,45.3 589.3,45.3 594.1,45.4 598.9,45.4 603.7,45.5 608.4,45.6 613.2,45.7 618.0,45.8 622.8,45.8 627.5,45.9 632.3,46.0 637.1,46.2 641.9,46.3 646.6,46.4 651.4,46.5 656.2,46.7 661.0,46.8 665.7,47.0 670.5,47.2 675.3,47.4 680.1,47.6 684.8,47.8 689.6,48.0 694.4,48.3 699.2,48.6 703.9,48.9 708.7,49.2 713.5,49.5 718.2,49.9 723.0,50.2 727.8,50.7 732.6,51.1 737.3,51.6 742.1,52.1 746.9,52.6 751.7,53.2 756.4,53.8 761.2,54.5 766.0,55.2 770.8,56.0 775.5,56.8 780.3,57.7 785.1,58.6 789.9,59.7 794.6,60.7 799.4,61.9 804.2,63.2 809.0,64.5 813.7,65.9 818.5,67.5 823.3,69.1 828.1,70.9 832.8,72.7 837.6,74.8 842.4,76.9 847.2,79.2 851.9,81.7 856.7,84.3 861.5,87.2 866.3,90.2 871.0,93.4 875.8,96.9 880.6,100.6 885.3,104.6 890.1,108.8 894.9,113.3 899.7,118.1 904.4,123.2 909.2,128.6 914.0,134.4 918.8,140.5 923.5,147.0 928.3,153.9 933.1,161.2 937.9,168.9 942.6,177.0 947.4,185.5 952.2,194.4 957.0,203.7 961.7,213.5 966.5,223.6 971.3,234.1 976.1,244.9 980.8,256.0 985.6,267.4 990.4,279.0 995.2,290.7 999.9,302.6 1004.7,314.6 1009.5,326.5 1014.3,338.4 1019.0,350.2 1023.8,361.8 1028.6,373.2 1033.4,384.4 1038.1,395.3 1042.9,405.8 1047.7,416.0 1052.5,425.8 1057.2,435.2 1062.0,444.2 1066.8,452.7 1071.5,460.9 1076.3,468.6 1081.1,476.0 1085.9,482.9 1090.6,489.5 1095.4,495.7 1100.2,501.5 1105.0,507.0 1109.7,512.2 1114.5,517.0 1119.3,521.5 1124.1,525.8 1128.8,529.8 1133.6,533.5 1138.4,537.0 1143.2,540.3 1147.9,543.4 1152.7,546.2 1157.5,548.9 1162.3,551.4 1167.0,553.7 1171.8,555.9 1176.6,558.0 1181.4,559.9 1186.1,561.6 1190.9,563.3 1195.7,564.8 1200.5,566.3 1205.2,567.6 1210.0,568.9 1214.8,570.1 1219.6,571.2 1224.3,572.2 1229.1,573.2 1233.9,574.1 1238.7,574.9 1243.4,575.7 1248.2,576.4 1253.0,577.1 1257.7,577.7 1262.5,578.3 1267.3,578.8 1272.1,579.3 1276.8,579.8 1281.6,580.3 1286.4,580.7 1291.2,581.1 1295.9,581.4 1300.7,581.8 1305.5,582.1 1310.3,582.4 1315.0,582.7" fill="none" stroke="#FF0000" stroke-width="1" stroke-dasharray="3 3"/>
<polyline points="522.5,44.6 527.3,44.6 532.0,44.6 536.8,44.6 541.6,44.6 546.4,44.6 551.1,44.6 555.9,44.7 560.7,44.7 565.5,44.7 570.2,44.7 575.0,44.7 579.8,44.7 584.6,44.7 589.3,44.8 594.1,44.8 598.9,44.8 603.7,44.8 608.4,44.8 613.2,44.9 618.0,44.9 622.8,44.9 627.5,44.9 632.3,45.0 637.1,45.0 641.9,45.1 646.6,45.1 651.4,45.1 656.2,45.2 661.0,45.2 665.7,45.3 670.5,45.3 675.3,45.4 680.1,45.5 684.8,45.5 689.6,45.6 694.4,45.7 699.2,45.8 703.9,45.9 708.7,46.0 713.5,46.1 718.2,46.2 723.0,46.3 727.8,46.4 732.6,46.6 737.3,46.7 742.1,46.9 746.9,47.0 751.7,47.2 756.4,47.4 761.2,47.6 766.0,47.8 770.8,48.1 775.5,48.3 780.3,48.6 785.1,48.9 789.9,49.2 794.6,49.6 799.4,49.9 804.2,50.3 809.0,50.7 813.7,51.2 818.5,51.7 823.3,52.2 828.1,52.7 832.8,53.3 837.6,53.9 842.4,54.6 847.2,55.3 851.9,56.1 856.7,57.0 861.5,57.9 866.3,58.8 871.0,59.8 875.8,60.9 880.6,62.1 885.3,63.4 890.1,64.7 894.9,66.2 899.7,67.7 904.4,69.4 909.2,71.2 914.0,73.1 918.8,75.1 923.5,77.3 928.3,79.6 933.1,82.1 937.9,84.8 942.6,87.7 947.4,90.7 952.2,94.0 957.0,97.5 961.7,101.2 966.5,105.2 971.3,109.5 976.1,114.0 980.8,118.9 985.6,124.0 990.4,129.5 995.2,135.4 999.9,141.6 1004.7,148.1 1009.5,155.1 1014.3,162.4 1019.0,170.2 1023.8,178.4 1028.6,186.9 1033.4,195.9 1038.1,205.3 1042.9,215.1 1047.7,225.3 1052.5,235.8 1057.2,246.7 1062.0,257.9 1066.8,269.3 1071.5,280.9 1076.3,292.7 1081.1,304.6 1085.9,316.6 1090.6,328.5 1095.4,340.4 1100.2,352.2 1105.0,363.8 1109.7,375.1 1114.5,386.2 1119.3,397.1 1124.1,407.5 1128.8,417.6 1133.6,427.4 1138.4,436.7 1143.2,445.6 1147.9,454.1 1152.7,462.2 1157.5,469.9 1162.3,477.2 1167.0,484.1 1171.8,490.6 1176.6,496.7 1181.4,502.5 1186.1,507.9 1190.9,513.0 1195.7,517.8 1200.5,522.3 1205.2,526.5 1210.0,530.4 1214.8,534.1 1219.6,537.6 1224.3,540.8 1229.1,543.9 1233.9,546.7 1238.7,549.3 1243.4,551.8 1248.2,554.1 1253.0,556.3 1257.7,558.3 1262.5,560.2 1267.3,561.9 1272.1,563.6 1276.8,565.1 1281.6,566.5 1286.4,567.9 1291.2,569.1 1295.9,570.3 1300.7,571.4 1305.5,572.4 1310.3,573.3 1315.0,574.2" fill="none" stroke="#050505" stroke-width="1" stroke-dasharray="3 3" stroke-dashoffset="3"/>
<polyline points="522.5,44.6 527.3,44.6 532.0,44.6 536.8,44.6 541.6,44.6 546.4,44.6 551.1,44.6 555.9,44.7 560.7,44.7 565.5,44.7 570.2,44.7 575.0,44.7 579.8,44.7 584.6,44.7 589.3,44.8 594.1,44.8 598.9,44.8 603.7,44.8 608.4,44.8 613.2,44.9 618.0,44.9 622.8,44.9 627.5,44.9 632.3,45.0 637.1,45.0 641.9,45.1 646.6,45.1 651.4,45.1 656.2,45.2 661.0,45.2 665.7,45.3 670.5,45.3 675.3,45.4 680.1,45.5 684.8,45.5 689.6,45.6 694.4,45.7 699.2,45.8 703.9,45.9 708.7,46.0 713.5,46.1 718.2,46.2 723.0,46.3 727.8,46.4 732.6,46.6 737.3,46.7 742.1,46.9 746.9,47.0 751.7,47.2 756.4,47.4 761.2,47.6 766.0,47.8 770.8,48.1 775.5,48.3 780.3,48.6 785.1,48.9 789.9,49.2 794.6,49.6 799.4,49.9 804.2,50.3 809.0,50.7 813.7,51.2 818.5,51.7 823.3,52.2 828.1,52.7 832.8,53.3 837.6,53.9 842.4,54.6 847.2,55.3 851.9,56.1 856.7,57.0 861.5,57.9 866.3,58.8 871.0,59.8 875.8,60.9 880.6,62.1 885.3,63.4 890.1,64.7 894.9,66.2 899.7,67.7 904.4,69.4 909.2,71.2 914.0,73.1 918.8,75.1 923.5,77.3 928.3,79.6 933.1,82.1 937.9,84.8 942.6,87.7 947.4,90.7 952.2,94.0 957.0,97.5 961.7,101.2 966.5,105.2 971.3,109.5 976.1,114.0 980.8,118.9 985.6,124.0 990.4,129.5 995.2,135.4 999.9,141.6 1004.7,148.1 1009.5,155.1 1014.3,162.4 1019.0,170.2 1023.8,178.4 1028.6,186.9 1033.4,195.9 1038.1,205.3 1042.9,215.1 1047.7,225.3 1052.5,235.8 1057.2,246.7 1062.0,257.9 1066.8,269.3 1071.5,280.9 1076.3,292.7 1081.1,304.6 1085.9,316.6 1090.6,328.5 1095.4,340.4 1100.2,352.2 1105.0,363.8 1109.7,375.1 1114.5,386.2 1119.3,397.1 1124.1,407.5 1128.8,417.6 1133.6,427.4 1138.4,436.7 1143.2,445.6 1147.9,454.1 1152.7,462.2 1157.5,469.9 1162.3,477.2 1167.0,484.1 1171.8,490.6 1176.6,496.7 1181.4,502.5 1186.1,507.9 1190.9,513.0 1195.7,517.8 1200.5,522.3 1205.2,526.5 1210.0,530.4 1214.8,534.1 1219.6,537.6 1224.3,540.8 1229.1,543.9 1233.9,546.7 1238.7,549.3 1243.4,551.8 1248.2,554.1 1253.0,556.3 1257.7,558.3 1262.5,560.2 1267.3,561.9 1272.1,563.6 1276.8,565.1 1281.6,566.5 1286.4,567.9 1291.2,569.1 1295.9,570.3 1300.7,571.4 1305.5,572.4 1310.3,573.3 1315.0,574.2" fill="none" stroke="#00BFBF" stroke-width="1" stroke-dasharray="3 3"/>
<polyline points="522.5,44.5 527.3,44.5 532.0,44.5 536.8,44.5 541.6,44.5 546.4,44.5 551.1,44.5 555.9,44.6 560.7,44.6 565.5,44.6 570.2,44.6 575.0,44.6 579.8,44.6 584.6,44.6 589.3,44.6 594.1,44.6 598.9,44.6 603.7,44.6 608.4,44.6 613.2,44.6 618.0,44.6 622.8,44.6 627.5,44.6 632.3,44.7 637.1,44.7 641.9,44.7 646.6,44.7 651.4,44.7 656.2,44.7 661.0,44.7 665.7,44.8 670.5,44.8 675.3,44.8 680.1,44.8 684.8,44.8 689.6,44.9 694.4,44.9 699.2,44.9 703.9,45.0 708.7,45.0 713.5,45.0 718.2,45.1 723.0,45.1 727.8,45.1 732.6,45.2 737.3,45.2 742.1,45.3 746.9,45.3 751.7,45.4 756.4,45.5 761.2,45.5 766.0,45.6 770.8,45.7 775.5,45.8 780.3,45.9 785.1,46.0 789.9,46.1 794.6,46.2 799.4,46.3 804.2,46.4 809.0,46.6 813.7,46.7 818.5,46.9 823.3,47.1 828.1,47.2 832.8,47.4 837.6,47.6 842.4,47.9 847.2,48.1 851.9,48.4 856.7,48.6 861.5,48.9 866.3,49.3 871.0,49.6 875.8,50.0 880.6,50.4 885.3,50.8 890.1,51.2 894.9,51.7 899.7,52.2 904.4,52.8 909.2,53.4 914.0,54.0 918.8,54.7 923.5,55.4 928.3,56.2 933.1,57.1 937.9,58.0 942.6,58.9 947.4,60.0 952.2,61.1 957.0,62.3 961.7,63.5 966.5,64.9 971.3,66.4 976.1,67.9 980.8,69.6 985.6,71.4 990.4,73.3 995.2,75.4 999.9,77.6 1004.7,79.9 1009.5,82.4 1014.3,85.1 1019.0,88.0 1023.8,91.1 1028.6,94.4 1033.4,97.9 1038.1,101.7 1042.9,105.7 1047.7,110.0 1052.5,114.6 1057.2,119.5 1062.0,124.7 1066.8,130.2 1071.5,136.1 1076.3,142.3 1081.1,149.0 1085.9,156.0 1090.6,163.4 1095.4,171.2 1100.2,179.4 1105.0,188.0 1109.7,197.1 1114.5,206.5 1119.3,216.3 1124.1,226.6 1128.8,237.2 1133.6,248.1 1138.4,259.2 1143.2,270.7 1147.9,282.3 1152.7,294.2 1157.5,306.1 1162.3,318.0 1167.0,330.0 1171.8,341.8 1176.6,353.6 1181.4,365.2 1186.1,376.5 1190.9,387.6 1195.7,398.3 1200.5,408.8 1205.2,418.8 1210.0,428.5 1214.8,437.8 1219.6,446.7 1224.3,455.1 1229.1,463.2 1233.9,470.8 1238.7,478.0 1243.4,484.9 1248.2,491.3 1253.0,497.4 1257.7,503.1 1262.5,508.5 1267.3,513.6 1272.1,518.3 1276.8,522.8 1281.6,527.0 1286.4,530.9 1291.2,534.6 1295.9,538.0 1300.7,541.2 1305.5,544.2 1310.3,547.0 1315.0,549.6" fill="none" stroke="#050505" stroke-width="1" stroke-dasharray="3 3" stroke-dashoffset="3"/>
<polyline points="522.5,44.5 527.3,44.5 532.0,44.5 536.8,44.5 541.6,44.5 546.4,44.5 551.1,44.5 555.9,44.6 560.7,44.6 565.5,44.6 570.2,44.6 575.0,44.6 579.8,44.6 584.6,44.6 589.3,44.6 594.1,44.6 598.9,44.6 603.7,44.6 608.4,44.6 613.2,44.6 618.0,44.6 622.8,44.6 627.5,44.6 632.3,44.7 637.1,44.7 641.9,44.7 646.6,44.7 651.4,44.7 656.2,44.7 661.0,44.7 665.7,44.8 670.5,44.8 675.3,44.8 680.1,44.8 684.8,44.8 689.6,44.9 694.4,44.9 699.2,44.9 703.9,45.0 708.7,45.0 713.5,45.0 718.2,45.1 723.0,45.1 727.8,45.1 732.6,45.2 737.3,45.2 742.1,45.3 746.9,45.3 751.7,45.4 756.4,45.5 761.2,45.5 766.0,45.6 770.8,45.7 775.5,45.8 780.3,45.9 785.1,46.0 789.9,46.1 794.6,46.2 799.4,46.3 804.2,46.4 809.0,46.6 813.7,46.7 818.5,46.9 823.3,47.1 828.1,47.2 832.8,47.4 837.6,47.6 842.4,47.9 847.2,48.1 851.9,48.4 856.7,48.6 861.5,48.9 866.3,49.3 871.0,49.6 875.8,50.0 880.6,50.4 885.3,50.8 890.1,51.2 894.9,51.7 899.7,52.2 904.4,52.8 909.2,53.4 914.0,54.0 918.8,54.7 923.5,55.4 928.3,56.2 933.1,57.1 937.9,58.0 942.6,58.9 947.4,60.0 952.2,61.1 957.0,62.3 961.7,63.5 966.5,64.9 971.3,66.4 976.1,67.9 980.8,69.6 985.6,71.4 990.4,73.3 995.2,75.4 999.9,77.6 1004.7,79.9 1009.5,82.4 1014.3,85.1 1019.0,88.0 1023.8,91.1 1028.6,94.4 1033.4,97.9 1038.1,101.7 1042.9,105.7 1047.7,110.0 1052.5,114.6 1057.2,119.5 1062.0,124.7 1066.8,130.2 1071.5,136.1 1076.3,142.3 1081.1,149.0 1085.9,156.0 1090.6,163.4 1095.4,171.2 1100.2,179.4 1105.0,188.0 1109.7,197.1 1114.5,206.5 1119.3,216.3 1124.1,226.6 1128.8,237.2 1133.6,248.1 1138.4,259.2 1143.2,270.7 1147.9,282.3 1152.7,294.2 1157.5,306.1 1162.3,318.0 1167.0,330.0 1171.8,341.8 1176.6,353.6 1181.4,365.2 1186.1,376.5 1190.9,387.6 1195.7,398.3 1200.5,408.8 1205.2,418.8 1210.0,428.5 1214.8,437.8 1219.6,446.7 1224.3,455.1 1229.1,463.2 1233.9,470.8 1238.7,478.0 1243.4,484.9 1248.2,491.3 1253.0,497.4 1257.7,503.1 1262.5,508.5 1267.3,513.6 1272.1,518.3 1276.8,522.8 1281.6,527.0 1286.4,530.9 1291.2,534.6 1295.9,538.0 1300.7,541.2 1305.5,544.2 1310.3,547.0 1315.0,549.6" fill="none" stroke="#FF00FF" stroke-width="1" stroke-dasharray="3 3"/>
</g>
<rect x="600" y="157" width="25" height="14" fill="#050505"/>
<rect x="1118" y="75" width="23" height="12" fill="#050505"/>
<text x="917" y="38" font-size="13" font-weight="bold" fill="#00FF00" text-anchor="middle">V(rx)</text>
<text x="600" y="169" font-size="14" font-weight="bold" fill="#00FF00">100</text>
<text x="1118" y="86" font-size="14" font-weight="bold" fill="#FF00FF">10k</text>
</svg>
</body></html>
